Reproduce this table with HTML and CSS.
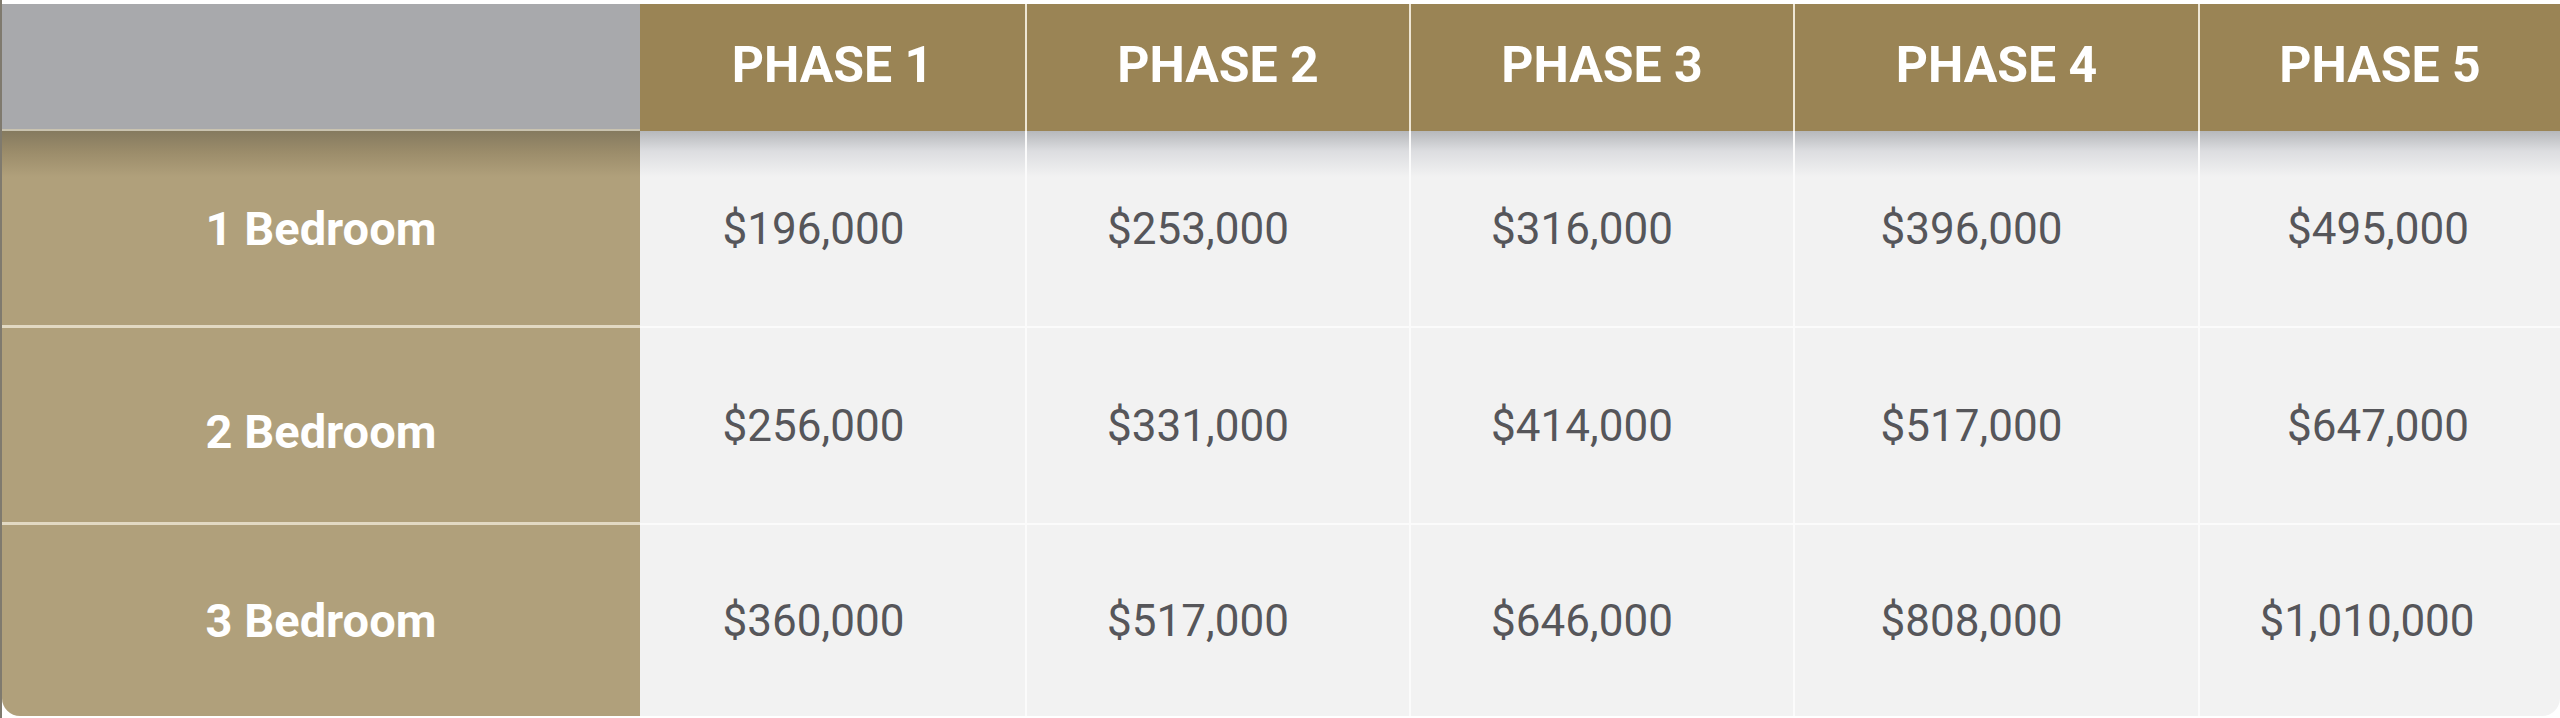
FILE: index.html
```html
<!DOCTYPE html>
<html lang="en">
<head>
<meta charset="utf-8">
<title>Pricing by Phase</title>
<link rel="stylesheet" href="styles.css">
</head>
<body>
<div class="frame">
  <div class="price-table">
    <div class="corner"></div>
    <div class="head">PHASE 1</div>
    <div class="head">PHASE 2</div>
    <div class="head">PHASE 3</div>
    <div class="head">PHASE 4</div>
    <div class="head">PHASE 5</div>

    <div class="label first">1 Bedroom</div>
    <div class="val first c1">$196,000</div>
    <div class="val first c2">$253,000</div>
    <div class="val first c3">$316,000</div>
    <div class="val first c4">$396,000</div>
    <div class="val first c5">$495,000</div>

    <div class="label mid">2 Bedroom</div>
    <div class="val c1">$256,000</div>
    <div class="val c2">$331,000</div>
    <div class="val c3">$414,000</div>
    <div class="val c4">$517,000</div>
    <div class="val c5">$647,000</div>

    <div class="label last">3 Bedroom</div>
    <div class="val last c1">$360,000</div>
    <div class="val last c2">$517,000</div>
    <div class="val last c3">$646,000</div>
    <div class="val last c4">$808,000</div>
    <div class="val last c5b">$1,010,000</div>
  </div>
</div>
</body>
</html>
```
FILE: styles.css
```css
html, body {
  margin: 0;
  padding: 0;
  background: #ffffff;
}

.frame {
  width: 2560px;
  height: 718px;
  box-sizing: border-box;
  padding-top: 4px;
  padding-left: 2px;
  background: linear-gradient(to right, #7f7a6e 0, #7f7a6e 2px, #ffffff 2px);
}

.price-table {
  display: grid;
  grid-template-columns: 638px 385px 384px 384px 405px 362px;
  grid-template-rows: 127px 197px 197px 191px;
  width: 2558px;
  border-radius: 0 0 18px 18px;
  overflow: hidden;
  font-family: Roboto, "Liberation Sans", Arial, sans-serif;
}

.corner {
  background: #a8a9ac;
  border-bottom: 2px solid #c9c3b0;
}

.head {
  display: flex;
  align-items: center;
  justify-content: center;
  padding-bottom: 6px;
  background: #9a8455;
  color: #ffffff;
  font-weight: 700;
  font-size: 50px;
  border-left: 2px solid #eee6d4;
  box-sizing: border-box;
}

.head:nth-child(2) {
  border-left: none;
}

.label {
  display: flex;
  align-items: center;
  justify-content: center;
  background: #b0a07b;
  color: #ffffff;
  font-weight: 700;
  font-size: 47px;
  border-bottom: 3px solid #e2d9c3;
  box-sizing: border-box;
}

.label.first {
  background: linear-gradient(#857a5f 0, #9c8d6b 22px, #b0a07b 46px);
}

.label.mid {
  padding-top: 12px;
}

.label.last {
  border-bottom: none;
}

.val {
  display: flex;
  align-items: center;
  justify-content: center;
  background: #f2f2f2;
  color: #56565a;
  font-size: 44px;
  border-left: 2px solid #fbfbfb;
  border-bottom: 2px solid #fbfbfb;
  box-sizing: border-box;
}

.val.first {
  background: linear-gradient(#b6b8bb 0, #dcdde0 20px, #f2f2f2 46px);
}

.val.last {
  border-bottom: none;
}

.val.c1 {
  border-left: none;
  padding-right: 38px;
}

.val.c2,
.val.c3 {
  padding-right: 40px;
}

.val.c4 {
  padding-right: 50px;
}

.val.c5 {
  padding-right: 4px;
}

.val.c5b {
  padding-right: 26px;
}
```
